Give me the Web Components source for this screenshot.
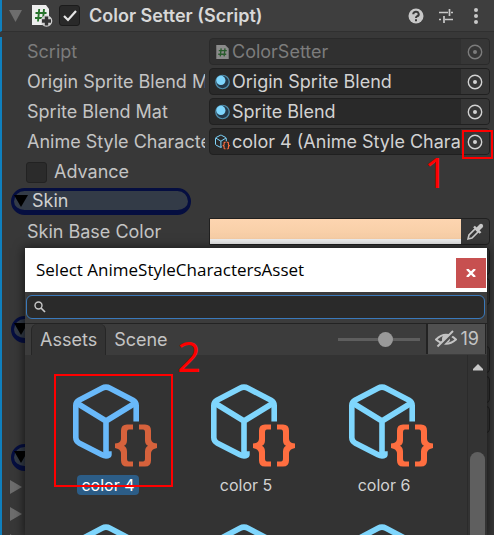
<!DOCTYPE html>
<html lang="en">
<head>
<meta charset="utf-8">
<title>Color Setter</title>
<style>
  html, body { margin: 0; height: 100%; background: #383838; overflow: hidden; }
  body { font: 18px/28px Inter, "Liberation Sans", sans-serif; color: #c4c4c4; }
</style>
</head>
<body>
<inspector-page></inspector-page>
<script>
const reset = `*{box-sizing:border-box}button,input{font:inherit;color:inherit;margin:0;padding:0;border:0;background:none}svg{display:block;flex:none}`;
function define(name, css, html) {
  customElements.define(name, class extends HTMLElement {
    constructor() {
      super();
      const t = document.createElement('template');
      t.innerHTML = `<style>${reset}${css}</style>${typeof html === 'function' ? html(this) : html}`;
      this.attachShadow({ mode: 'open' }).append(t.content.cloneNode(true));
    }
  });
}

const brace = 'M60 40H54Q48 40 48 46V54Q48 57 45 58.500L42 59V63.500L45 64.500Q48 66 48 69V76Q48 82 54 82H60V77H56Q54 77 54 74V67Q54 63 51 61.200Q54 60 54 56V48Q54 45 56 45H60Z';
const glyphs = {
  asset: `<svg viewBox="0 0 84 82"><g fill="none" stroke="var(--cube,#7fd6fd)" stroke-width="5.600" stroke-linejoin="round"><path d="M63.200 37V21Q63.200 17.600 60 15.800L37 3.800Q33 1.600 29 3.800L6 15.800Q2.800 17.600 2.800 21V53Q2.800 56.500 6 58.400L29 70.200Q33 72.300 35.900 70.500V66.700"/><path d="M4.500 19L33 36.500L61.500 19M33 36.500V71"/></g><g fill="var(--brace,#ff6e40)"><path d="${brace}"/><path d="${brace}" transform="translate(126 0) scale(-1 1)"/></g></svg>`,
  material: `<svg viewBox="0 0 16 16"><circle cx="8" cy="8" r="7.200" fill="#25394a" stroke="#4f8dab" stroke-width="1.300"/><circle cx="6.300" cy="6.300" r="4.900" fill="#7fd6fd"/></svg>`,
  script: `<svg viewBox="0 0 16 18"><path d="M1 1h10l4 4v12H1z" fill="#8b8b8b"/><path d="M6.500 5L5.500 14M10.800 5L9.800 14M3.800 7.500h9M3.200 11.500h9" stroke="#295b2d" stroke-width="1.500"/></svg>`
};

define('inspector-header', `
  :host{display:flex;align-items:center;height:32px;padding:0 8px 0 7px;background:#3e3e3e;border-bottom:1px solid #303030;border-left:2px solid #0f80be}
  .fold{width:13px;height:12px;margin-right:9px}
  .fold svg{width:13px;height:12px}
  .cs{margin-right:6px}
  .on{appearance:none;width:21px;height:21px;border:1px solid #1b1b1b;border-radius:3px;background:#292929;margin:0;display:block}
  .tick{display:grid;margin-right:9px}.tick>*{grid-area:1/1}.tick svg{pointer-events:none}
  h1{font-size:18px;line-height:28px;font-weight:600;margin:0;flex:1;color:#d8d8d8;white-space:nowrap}
  .tools{display:flex;gap:14px;align-items:center;margin-right:2px}
  .tools button{display:grid;place-items:center}
`, `
  <button class="fold" aria-label="Collapse"><svg viewBox="0 0 13 12"><path d="M0 0h13L6.500 12z" fill="#6d6d6d"/></svg></button>
  <svg class="cs" width="22" height="23" viewBox="0 0 22 23"><path d="M1 1h14l3 4v16H1z" fill="#ededed"/><path d="M8.200 5L7 17.500M13 5l-1.200 12.500M4.500 9h11M4 14h10" stroke="#27742c" stroke-width="1.900"/><circle cx="15.500" cy="17" r="5.800" fill="#d0d0d0"/><path d="M15.500 12.500v9M11 17h9" stroke="#343434" stroke-width="3.400"/></svg>
  <span class="tick"><input class="on" type="checkbox" checked aria-label="Enabled"><svg width="21" height="21" viewBox="0 0 21 21"><path d="M5 11l4 4 8-9" fill="none" stroke="#e6e6e6" stroke-width="2.200"/></svg></span>
  <h1>Color Setter (Script)</h1>
  <div class="tools">
    <button aria-label="Help"><svg width="16" height="16" viewBox="0 0 16 16"><circle cx="8" cy="8" r="7.500" fill="#c8c8c8"/><path d="M5.300 6.200a2.700 2.400 0 1 1 3.700 2.100q-1 .5-1 1.700M8 11.300v2" fill="none" stroke="#3a3a3a" stroke-width="2"/></svg></button>
    <button aria-label="Presets"><svg width="16" height="16" viewBox="0 0 16 16"><path d="M1 4.500h9M13 4.500h2M11.500 1v7M1 11.500h2M7 11.500h8M6 8v7" fill="none" stroke="#c8c8c8" stroke-width="1.700"/></svg></button>
    <button aria-label="More"><svg width="16" height="16" viewBox="0 0 16 16"><g fill="#c8c8c8"><circle cx="8" cy="2" r="2"/><circle cx="8" cy="8" r="2"/><circle cx="8" cy="14" r="2"/></g></svg></button>
  </div>
`);

define('object-field', `
  :host{display:flex;height:28px;margin-bottom:2px;padding-right:4px}
  :host([disabled]) .name,:host([disabled]) .box{color:#7c7c7c}
  .name{flex:none;width:178px;margin-right:4px;overflow:hidden;white-space:nowrap}
  .box{flex:1;min-width:0;display:flex;height:27px;background:#292929;border:1px solid #202020;border-radius:4px;overflow:hidden;color:#d2d2d2}
  :host([disabled]) .box{background:#303030;border-color:#2a2a2a}
  .value{flex:1;min-width:0;display:flex;align-items:center;gap:2px;padding-left:5px;overflow:hidden;white-space:nowrap;line-height:28px}
  .value svg{width:15px;height:16px}
  button{width:28px;display:grid;place-items:center;background:#363636}
`, h => `
  <label class="name" for="pick">${h.getAttribute('label')}</label>
  <div class="box"><span class="value">${glyphs[h.getAttribute('icon')] || ''}<span>${h.getAttribute('value') || ''}</span></span>
  <button id="pick"><svg width="16" height="16" viewBox="0 0 16 16"><circle cx="8" cy="8" r="6.700" fill="none" stroke="currentColor" stroke-width="1.400"/><circle cx="8" cy="8" r="2" fill="currentColor"/></svg></button></div>
`);

define('toggle-field', `
  :host{display:flex;align-items:center;gap:7px;height:28px;margin-bottom:2px}
  input{appearance:none;width:21px;height:21px;border:1px solid #222;border-radius:3px;background:#2b2b2b;margin-left:-1px}
`, `<input type="checkbox" id="t"><label for="t"><slot></slot></label>`);

define('group-pill', `
  :host{display:block;height:28px;margin:0 0 2px -16px;width:180px}
  button{display:flex;align-items:center;gap:4px;width:100%;height:27px;border:3px solid #050e40;border-bottom-width:5px;border-radius:14px;background:#333b47;color:#d0d0d0;line-height:20px}
`, `<button><svg width="14" height="12" viewBox="0 0 14 12"><path d="M0 0h14L7 12z" fill="#000"/></svg><slot></slot></button>`);

define('color-field', `
  :host{display:flex;height:28px;margin-bottom:2px;padding-right:4px}
  label{flex:none;width:178px;margin-right:4px;white-space:nowrap}
  .box{flex:1;display:flex;height:27px;border:1px solid #202020;border-radius:0 4px 4px 0;overflow:hidden}
  .swatch{flex:1;background:linear-gradient(#fdd5b0,#f6cda5);border-bottom:5px solid #eee}
  .drop{width:28px;display:grid;place-items:center}
`, `<label for="c">Skin Base Color</label><div class="box"><button class="swatch" id="c"></button><button class="drop" aria-label="Pick color"><svg width="18" height="18" viewBox="0 0 18 18"><path d="M2 16l1-4 6.500-6.500 3 3L6 15z" fill="none" stroke="#c8c8c8" stroke-width="1.600"/><path d="M8 3.500l6.500 6.500" stroke="#c8c8c8" stroke-width="2.400"/><path d="M11.500 6.500L15 3" stroke="#c8c8c8" stroke-width="4.200" stroke-linecap="round"/></svg></button></div>`);

define('fold-row', `
  :host{display:block;height:27px;margin-left:-17px}
  button{display:block;padding:6px 0}
`, `<button aria-label="Expand"><svg width="12" height="14" viewBox="0 0 12 14"><path d="M0 0l12 7-12 7z" fill="#6d6d6d"/></svg></button>`);

define('asset-item', `
  :host{display:flex;flex-direction:column;align-items:center;height:140px;font-size:16px;line-height:20px;color:#d2d2d2}
  :host([selected]){--cube:#69b9fa;--brace:#d6623c}
  button{display:flex;flex-direction:column;align-items:center;gap:8px}
  .pic{padding-left:13px}
  .pic svg{width:84px;height:83px}
  .name{padding:0 4px;border-radius:4px}
  :host([selected]) .name{background:#2c5d87;color:#fff}
`, `<button><span class="pic">${glyphs.asset}</span><span class="name"><slot></slot></span></button>`);

define('asset-picker', `
  :host{display:flex;flex-direction:column;background:#333;box-shadow:0 1px 10px 1px #0009}
  header{display:flex;align-items:center;height:44px;padding:0 1px 0 11px;background:#fff;flex:none}
  h2{flex:1;margin:0;font:17px/24px "Open Sans","Noto Sans",sans-serif;color:#000;white-space:nowrap}
  .close{width:30px;height:30px;margin-top:6px;background:#c75050;display:grid;place-items:center}
  .find{display:flex;padding:3px 2px 4px 1px;height:31px;background:#3c3c3c;flex:none}
  .find label{flex:1;display:flex;align-items:center;padding-left:7px;gap:5px;background:#2a2a2a;border:1px solid #3a79bb;border-radius:6px}
  .find input{flex:1;min-width:0;height:20px;outline:0}
  nav{display:flex;height:32px;background:#3c3c3c;border-top:1px solid #232323;padding-left:6px;flex:none}
  .tab{padding:0 8px;white-space:nowrap;color:#c4c4c4}
  .tab[aria-selected=true]{background:#333;border:1px solid #262626;border-width:0 1px;border-radius:6px 6px 0 0}
  .grow{flex:1}
  input[type=range]{appearance:none;width:82px;margin-right:6px;align-self:center}
  input[type=range]::-webkit-slider-runnable-track{height:3px;background:#5e5e5e}
  input[type=range]::-webkit-slider-thumb{appearance:none;width:15px;height:15px;margin-top:-6px;border-radius:50%;background:#999}
  .hide{display:flex;align-items:center;gap:4px;padding:0 6px 0 7px;height:30px;background:#505050;border-left:2px solid #232323;border-right:1px solid #232323;margin-right:1px}
  .body{flex:1;min-height:0;display:flex;overflow:hidden}
  .grid{flex:1;display:grid;grid-template-columns:repeat(3,1fr);padding:29px 14px 0;align-content:start}
  .bar{width:20px;flex:none;display:flex;flex-direction:column;align-items:center;gap:81px;padding-top:9px;border-left:1px solid #2b2b2b}
  .thumb{width:15px;flex:1;border-radius:8px 8px 0 0;background:#5f5f5f}
`, `
  <header><h2><slot name="title"></slot></h2><button class="close" aria-label="Close"><svg width="10" height="8" viewBox="0 0 10 8"><path d="M1 0l8 8M9 0L1 8" stroke="#fff" stroke-width="2.400"/></svg></button></header>
  <div class="find"><label for="q"><svg width="12" height="12" viewBox="0 0 12 12"><circle cx="4.500" cy="4.500" r="3.500" fill="none" stroke="#c8c8c8" stroke-width="1.400"/><path d="M7 7l4 4" stroke="#c8c8c8" stroke-width="1.700"/></svg><input id="q" type="text" aria-label="Search"></label></div>
  <nav><button class="tab" role="tab" aria-selected="true">Assets</button><button class="tab" role="tab" aria-selected="false">Scene</button><span class="grow"></span>
    <input type="range" min="0" max="100" value="60" aria-label="Icon size">
    <button class="hide"><svg width="22" height="18" viewBox="0 0 22 18"><path d="M1 9.500Q11 0 21 9.500Q11 18 1 9.500z" fill="none" stroke="#c4c4c4" stroke-width="1.900"/><circle cx="11" cy="9" r="4" fill="#c4c4c4"/><path d="M4 17.500L19.500 2" stroke="#505050" stroke-width="3"/><path d="M2.500 16.500L18 1" stroke="#c4c4c4" stroke-width="2"/></svg><span>19</span></button></nav>
  <div class="body"><div class="grid"><slot></slot></div><div class="bar"><svg width="10" height="7" viewBox="0 0 10 7"><path d="M5 0l5 5v1.500H0V5z" fill="#c8c8c8"/></svg><div class="thumb"></div></div></div>
`);

define('mark-box', `:host{position:absolute;border:2px solid #f00;pointer-events:none}`, ``);
define('mark-number', `:host{position:absolute;font:42px/30px "Open Sans","Noto Sans",sans-serif;color:#f00;pointer-events:none}`, `<slot></slot>`);

define('inspector-page', `
  :host{display:block;position:relative;height:100vh;overflow:hidden}
  .list{margin-top:5px;padding:1px 0 0 25px;border-left:2px solid #0f80be}
  .space{height:8px}
  asset-picker{position:absolute;left:25px;right:7px;top:248px;bottom:0}
  .m1{top:130px;right:1px;width:31px;height:29px}
  .n1{top:157px;right:46px}
  .m2{left:54px;top:374px;width:119px;height:113px}
  .n2{left:177px;top:341px}
`, `
  <inspector-header></inspector-header>
  <div class="list">
    <object-field label="Script" icon="script" value="ColorSetter" disabled></object-field>
    <object-field label="Origin Sprite Blend Mat" icon="material" value="Origin Sprite Blend"></object-field>
    <object-field label="Sprite Blend Mat" icon="material" value="Sprite Blend"></object-field>
    <object-field label="Anime Style Characters" icon="asset" value="color 4 (Anime Style Characters Asset)"></object-field>
    <toggle-field>Advance</toggle-field>
    <group-pill>Skin</group-pill>
    <color-field></color-field>
    <object-field label=""></object-field>
    <object-field label=""></object-field>
    <div class="space"></div>
    <group-pill></group-pill>
    <object-field label=""></object-field>
    <object-field label=""></object-field>
    <object-field label=""></object-field>
    <div class="space"></div>
    <group-pill></group-pill>
    <fold-row></fold-row><fold-row></fold-row><fold-row></fold-row>
  </div>
  <asset-picker><span slot="title">Select AnimeStyleCharactersAsset</span>
    <asset-item selected>color 4</asset-item><asset-item>color 5</asset-item><asset-item>color 6</asset-item>
    <asset-item></asset-item><asset-item></asset-item><asset-item></asset-item>
  </asset-picker>
  <mark-box class="m1"></mark-box><mark-number class="n1">1</mark-number>
  <mark-box class="m2"></mark-box><mark-number class="n2">2</mark-number>
`);
</script>
</body>
</html>
